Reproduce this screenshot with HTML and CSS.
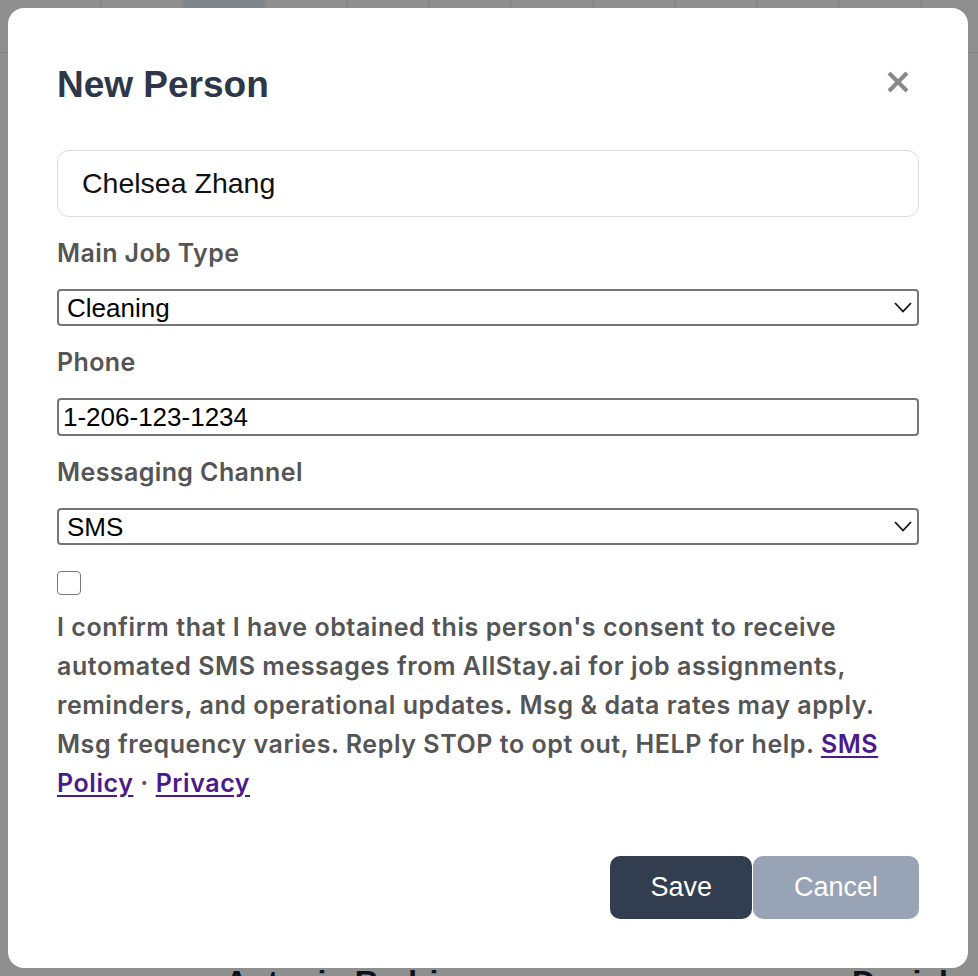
FILE: index.html
```html
<!DOCTYPE html>
<html lang="en">
<head>
<meta charset="utf-8">
<title>New Person</title>
<link rel="stylesheet" href="styles.css">
</head>
<body>
<div class="bg">
  <div class="bg-head">
    <div class="bg-cell"></div><div class="bg-cell"></div><div class="bg-cell bg-cell-active"></div><div class="bg-cell"></div><div class="bg-cell"></div><div class="bg-cell"></div><div class="bg-cell"></div><div class="bg-cell"></div><div class="bg-cell"></div><div class="bg-cell"></div><div class="bg-cell"></div><div class="bg-cell"></div>
  </div>
  <div class="bg-names">
    <span class="bg-name bg-name-a">Antonio Rodriguez</span>
    <span class="bg-name bg-name-b">Daniel</span>
  </div>
</div>

<div class="overlay">
  <div class="modal">
    <div class="modal-head">
      <h2 class="modal-title">New Person</h2>
      <button class="close" type="button" aria-label="Close">
        <svg width="22" height="22" viewBox="0 0 22 22"><path d="M2 2 L20 20 M20 2 L2 20" stroke="#8a8a8a" stroke-width="4.2" stroke-linecap="butt"/></svg>
      </button>
    </div>

    <div class="form">
      <input class="name-input" type="text" value="Chelsea Zhang">

      <label class="field-label">Main Job Type</label>
      <div class="select-wrap">
        <select class="field-select"><option>Cleaning</option></select>
        <svg class="chev" width="18" height="11" viewBox="0 0 18 11"><path d="M1 1 L9 9.5 L17 1" fill="none" stroke="#111" stroke-width="1.8"/></svg>
      </div>

      <label class="field-label">Phone</label>
      <input class="field-input" type="text" value="1-206-123-1234">

      <label class="field-label">Messaging Channel</label>
      <div class="select-wrap">
        <select class="field-select"><option>SMS</option></select>
        <svg class="chev" width="18" height="11" viewBox="0 0 18 11"><path d="M1 1 L9 9.5 L17 1" fill="none" stroke="#111" stroke-width="1.8"/></svg>
      </div>

      <div class="consent">
        <input class="check" type="checkbox">
        <p class="consent-text">I confirm that I have obtained this person's consent to receive automated SMS messages from AllStay.ai for job assignments, reminders, and operational updates. Msg &amp; data rates may apply. Msg frequency varies. Reply STOP to opt out, HELP for help. <a href="#" class="link">SMS Policy</a> · <a href="#" class="link">Privacy</a></p>
      </div>
    </div>

    <div class="actions">
      <button class="btn btn-save" type="button">Save</button>
      <button class="btn btn-cancel" type="button">Cancel</button>
    </div>
  </div>
</div>
</body>
</html>
```

FILE: styles.css
```css
html, body {
  margin: 0;
  padding: 0;
  height: 100%;
  overflow: hidden;
}

body {
  background: #ffffff;
  font-family: Inter, "Liberation Sans", sans-serif;
}

/* background app (under the overlay) */
.bg {
  height: 100vh;
  display: flex;
  flex-direction: column;
  overflow: hidden;
}

.bg-head {
  display: flex;
  padding-left: 20px;
  height: 52px;
  border-bottom: 1px solid #ececec;
  overflow: hidden;
}

.bg-cell {
  width: 80px;
  flex: none;
  border-right: 2px solid #f2f2f2;
}

.bg-cell-active {
  background: #e3e9f6;
}

.bg-names {
  margin-top: auto;
  display: flex;
  height: 14px;
  overflow: visible;
  font-family: "Liberation Sans", sans-serif;
  font-weight: 700;
  font-size: 32px;
  color: #1a2230;
  line-height: 1;
}

.bg-name-a {
  margin-left: 225px;
  margin-top: 4px;
}

.bg-name-b {
  margin-left: auto;
  margin-right: 30px;
  margin-top: 4px;
}

/* overlay and modal */
.overlay {
  position: fixed;
  inset: 0;
  background: rgba(0, 0, 0, 0.44);
  display: flex;
  align-items: flex-start;
  padding: 8px 0 0 8px;
}

.modal {
  width: 960px;
  height: 960px;
  box-sizing: border-box;
  background: #ffffff;
  border-radius: 16px;
  padding: 49px;
  display: flex;
  flex-direction: column;
}

.modal-head {
  display: flex;
  align-items: center;
  justify-content: space-between;
  margin-top: 7px;
  height: 42px;
}

.modal-title {
  margin: 0;
  font-family: "Liberation Sans", sans-serif;
  font-weight: 700;
  font-size: 37px;
  line-height: 42px;
  color: #2d3748;
}

.close {
  border: 0;
  background: none;
  padding: 0;
  margin-right: 10px;
  margin-top: -6px;
  width: 22px;
  height: 22px;
  display: flex;
}

.form {
  margin-top: 44px;
  display: flex;
  flex-direction: column;
  gap: 20px;
}

.name-input {
  height: 67px;
  box-sizing: border-box;
  border: 1.5px solid #dcdcdc;
  border-radius: 12px;
  padding: 0 24px;
  font-family: "Liberation Sans", sans-serif;
  font-size: 28.5px;
  color: #111;
  outline: none;
}

.field-label {
  font-family: Inter, "Liberation Sans", sans-serif;
  font-weight: 600;
  font-size: 25px;
  letter-spacing: 0.4px;
  line-height: 32px;
  color: #555555;
}

.select-wrap {
  position: relative;
  display: flex;
}

.field-select,
.field-input {
  appearance: none;
  -webkit-appearance: none;
  width: 100%;
  height: 37px;
  box-sizing: border-box;
  border: 2px solid #767676;
  border-radius: 4px;
  background: #ffffff;
  padding: 0 8px;
  font-family: "Liberation Sans", sans-serif;
  font-size: 26px;
  color: #000;
  outline: none;
}

.field-input {
  height: 38px;
  padding: 0 4px;
}

.chev {
  position: absolute;
  right: 7px;
  top: 13px;
  pointer-events: none;
}

.consent {
  display: flex;
  flex-direction: column;
  align-items: flex-start;
}

.check {
  appearance: none;
  -webkit-appearance: none;
  margin: 6px 0 0 0;
  width: 24px;
  height: 24px;
  box-sizing: border-box;
  border: 1.5px solid #7a7a7a;
  border-radius: 4px;
  background: #fff;
}

.consent-text {
  margin: 13px 0 0 0;
  font-family: Inter, "Liberation Sans", sans-serif;
  font-weight: 600;
  font-size: 25px;
  letter-spacing: 0.56px;
  line-height: 39px;
  color: #555555;
}

.link {
  color: #4b1a8c;
  text-decoration: underline;
  text-underline-offset: 3px;
}

.actions {
  margin-top: auto;
  display: flex;
  justify-content: flex-end;
  gap: 1px;
}

.btn {
  height: 63px;
  border: 0;
  border-radius: 10px;
  padding: 0 41px;
  font-family: "Liberation Sans", sans-serif;
  font-size: 27px;
  color: #ffffff;
}

.btn-save {
  background: #323e4f;
  padding: 0 40px;
}

.btn-cancel {
  background: #98a4b6;
  padding: 0 41px;
}
```
